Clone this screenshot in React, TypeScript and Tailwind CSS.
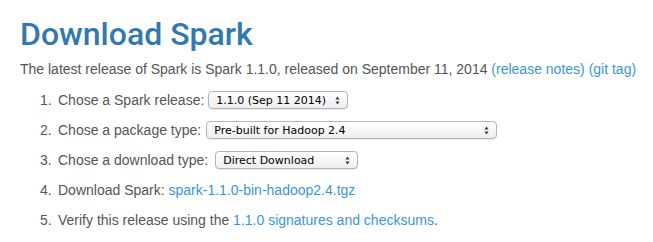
import React from 'react';

// Small native-looking select box (Mac style)
const Select = ({ value, width }: { value: string; width: string }) => (
  <span
    className={`inline-flex h-[18px] items-center justify-between rounded-[4px] border border-[#b4b4b4] bg-gradient-to-b from-white to-[#eeeeee] pl-[7px] pr-[7px] align-middle text-[11px] leading-none text-black shadow-[0_1px_1px_rgba(0,0,0,0.08)] font-['DejaVu_Sans',sans-serif] ${width}`}
  >
    <span>{value}</span>
    <svg width="5" height="9" viewBox="0 0 5 9" className="text-[#333]">
      <path d="M2.5 0.5 L4.5 3.5 H0.5 Z" fill="currentColor" />
      <path d="M2.5 8.5 L4.5 5.5 H0.5 Z" fill="currentColor" />
    </svg>
  </span>
);

const steps = [
  { label: 'Chose a Spark release:', select: { value: '1.1.0 (Sep 11 2014)', width: 'ml-[4px] w-[140px]' } },
  { label: 'Chose a package type:', select: { value: 'Pre-built for Hadoop 2.4', width: 'ml-[5px] w-[291px]' } },
  { label: 'Chose a download type:', select: { value: 'Direct Download', width: 'ml-[7px] w-[143px]' } },
];

const Step = ({ n, children }: { n: number; children: React.ReactNode }) => (
  <li className="flex h-[20px] items-center whitespace-nowrap leading-[20px]">
    <span className="w-[18px]">{n}.</span>
    <span className="flex items-center">{children}</span>
  </li>
);

export default function App() {
  return (
    <div className="h-[242px] w-[653px] bg-white px-[20px] pt-[14px] text-[14px] text-[#555] font-['Liberation_Sans',Arial,sans-serif]">
      <h1 className="text-[32px] font-medium leading-[40px] text-[#3179ae] font-['Roboto',sans-serif]">
        Download Spark
      </h1>
      <p className="mt-[5px] whitespace-nowrap leading-[20px]">
        The latest release of Spark is Spark 1.1.0, released on September 11, 2014{' '}
        <a className="text-[#3a95dd]">(release notes)</a> <a className="text-[#3a95dd]">(git tag)</a>
      </p>
      <ol className="mt-[11px] flex flex-col gap-[10px] pl-[20px]">
        {steps.map((s, i) => (
          <Step key={s.label} n={i + 1}>
            {s.label}
            <Select value={s.select.value} width={s.select.width} />
          </Step>
        ))}
        <Step n={4}>
          Download Spark:&nbsp;<a className="text-[#3a95dd]">spark-1.1.0-bin-hadoop2.4.tgz</a>
        </Step>
        <Step n={5}>
          Verify this release using the&nbsp;<a className="text-[#3a95dd]">1.1.0 signatures and checksums</a>.
        </Step>
      </ol>
    </div>
  );
}
